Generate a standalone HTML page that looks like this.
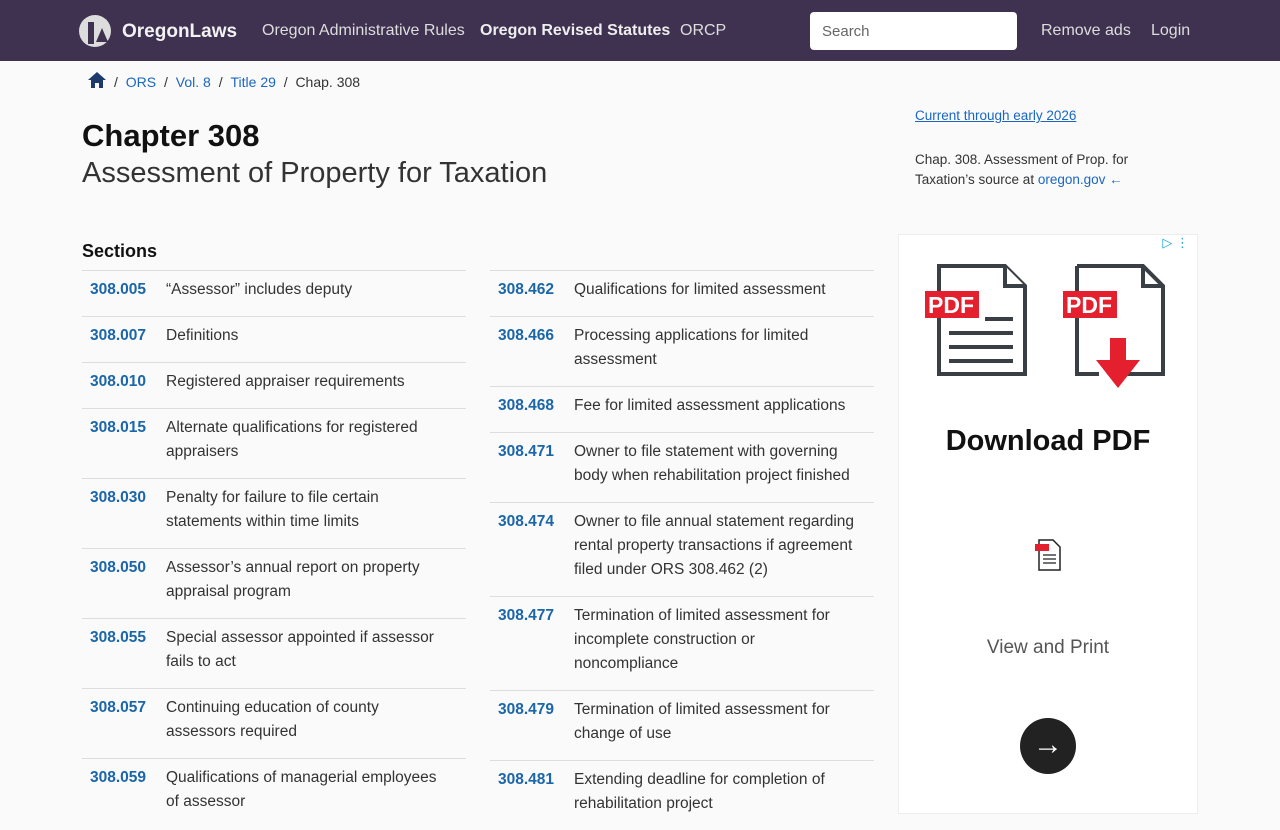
<!DOCTYPE html>
<html><head><meta charset="utf-8"><style>
*{box-sizing:border-box;margin:0;padding:0}
body{width:1280px;height:800px;overflow:hidden;background:#fafafa;font-family:"Liberation Sans","DejaVu Sans",sans-serif;color:#333}
.hdr{height:61px;background:#3f3150;position:relative;color:#ddd}
.hdr span{position:absolute;top:22px;font-size:16px}
a{color:#1a66c4;text-decoration:none}
.bc{position:absolute;top:74px;left:114px;font-size:14px;color:#333}
.bc a{margin:0 4px}
h1{position:absolute;left:82px;top:118px;font-size:31px;font-weight:bold;color:#111}
.sub{position:absolute;left:82px;top:157px;font-size:29px;font-weight:300;color:#333}
.secs{position:absolute;left:82px;top:241px;font-size:18px;font-weight:bold;color:#111}
.col{position:absolute;top:270px;width:384px}
.row{border-top:1px solid #ddd;padding:7px 0 14px 0;display:flex;font-size:15.5px;line-height:24px}
.row b{color:#1a66a8;width:84px;padding-left:8px;flex:none}
.l .row span{width:282px}
.r .row span{width:285px}
.side{position:absolute;left:915px;font-size:13.5px;line-height:20px;color:#333}
.ad{position:absolute;left:898px;top:234px;width:300px;height:580px;background:#fff;border:1px solid #eee}
</style></head><body>
<div class="hdr">
<svg style="position:absolute;left:78px;top:14px" width="34" height="34" viewBox="0 0 34 34"><circle cx="17" cy="17" r="16" fill="#ddd"/><path d="M10 8h6v22h-6zM18 28l6-14 6 14z" fill="#3f3150"/></svg>
<span style="left:122px;top:21px;font-size:19px;font-weight:bold;color:#f2f2f2">OregonLaws</span>
<span style="left:262px">Oregon Administrative Rules</span>
<span style="left:480px;font-weight:bold;color:#eee">Oregon Revised Statutes</span>
<span style="left:680px">ORCP</span>
<div style="position:absolute;left:810px;top:12px;width:207px;height:38px;background:#fff;border-radius:4px;color:#666;font-size:15px;padding:11px 12px">Search</div>
<span style="left:1041px">Remove ads</span>
<span style="left:1151px">Login</span>
</div>
<svg style="position:absolute;left:88px;top:72px" width="18" height="16" viewBox="0 0 18 16"><path d="M9 0L0 8h3v8h4v-5h4v5h4V8h3z" fill="#1d3a6b"/></svg>
<div class="bc">/ <a>ORS</a> / <a>Vol. 8</a> / <a>Title 29</a> / &nbsp;Chap. 308</div>
<h1>Chapter 308</h1>
<div class="sub">Assessment of Property for Taxation</div>
<div class="secs">Sections</div>
<div class="col l" style="left:82px">
<div class="row"><b>308.005</b><span>“Assessor” includes deputy</span></div>
<div class="row"><b>308.007</b><span>Definitions</span></div>
<div class="row"><b>308.010</b><span>Registered appraiser requirements</span></div>
<div class="row"><b>308.015</b><span>Alternate qualifications for registered appraisers</span></div>
<div class="row"><b>308.030</b><span>Penalty for failure to file certain statements within time limits</span></div>
<div class="row"><b>308.050</b><span>Assessor’s annual report on property appraisal program</span></div>
<div class="row"><b>308.055</b><span>Special assessor appointed if assessor fails to act</span></div>
<div class="row"><b>308.057</b><span>Continuing education of county assessors required</span></div>
<div class="row"><b>308.059</b><span>Qualifications of managerial employees of assessor</span></div>
</div>
<div class="col r" style="left:490px">
<div class="row"><b>308.462</b><span>Qualifications for limited assessment</span></div>
<div class="row"><b>308.466</b><span>Processing applications for limited assessment</span></div>
<div class="row"><b>308.468</b><span>Fee for limited assessment applications</span></div>
<div class="row"><b>308.471</b><span>Owner to file statement with governing body when rehabilitation project finished</span></div>
<div class="row"><b>308.474</b><span>Owner to file annual statement regarding rental property transactions if agreement filed under ORS 308.462 (2)</span></div>
<div class="row"><b>308.477</b><span>Termination of limited assessment for incomplete construction or noncompliance</span></div>
<div class="row"><b>308.479</b><span>Termination of limited assessment for change of use</span></div>
<div class="row"><b>308.481</b><span>Extending deadline for completion of rehabilitation project</span></div>
</div>
<div class="side" style="top:106px"><a style="text-decoration:underline">Current through early 2026</a></div>
<div class="side" style="top:150px">Chap. 308. Assessment of Prop. for<br>Taxation’s source at <a>oregon.gov ←</a></div>
<div class="ad">
<svg style="position:absolute;left:26px;top:28px" width="240" height="130" viewBox="0 0 240 130">
<path d="M14 3h66l20 20v88H14z" fill="#fff" stroke="#3a3e45" stroke-width="4"/><path d="M80 3v20h20" fill="#fff" stroke="#3a3e45" stroke-width="4"/>
<rect x="0" y="28" width="54" height="27" fill="#e5202e"/><text x="3" y="50" font-family="Liberation Sans" font-weight="bold" font-size="23" fill="#fff">PDF</text>
<path d="M60 56h28M24 70h64M24 84h64M24 98h64" stroke="#3a3e45" stroke-width="4"/>
<path d="M152 3h66l20 20v88h-48M174 111h-22z" fill="#fff" stroke="#3a3e45" stroke-width="4"/><path d="M152 3v108h22M218 3v20h20" fill="none" stroke="#3a3e45" stroke-width="4"/>
<rect x="138" y="28" width="54" height="27" fill="#e5202e"/><text x="141" y="50" font-family="Liberation Sans" font-weight="bold" font-size="23" fill="#fff">PDF</text>
<path d="M185 75h16v22h14l-22 28-22-28h14z" fill="#e5202e"/>
</svg>
<div style="position:absolute;top:190px;width:100%;text-align:center;font-size:29px;font-weight:bold;color:#111">Download PDF</div>
<svg style="position:absolute;left:135px;top:304px" width="28" height="32" viewBox="0 0 28 32"><path d="M5 1h14l7 7v23H5z" fill="#fff" stroke="#222" stroke-width="1.5"/><path d="M9 16h13M9 20h13M9 24h13" stroke="#222" stroke-width="1.3"/><rect x="1" y="5" width="14" height="7" fill="#e5202e"/></svg>
<div style="position:absolute;top:402px;width:100%;text-align:center;font-size:19px;color:#555">View and Print</div>
<div style="position:absolute;left:121px;top:483px;width:56px;height:56px;border-radius:50%;background:#222;color:#fff;font-size:30px;text-align:center;line-height:54px">→</div>
<div style="position:absolute;right:8px;top:0px;color:#1aa3d8;font-size:13px">▷ ⋮</div>
</div>
</body></html>
